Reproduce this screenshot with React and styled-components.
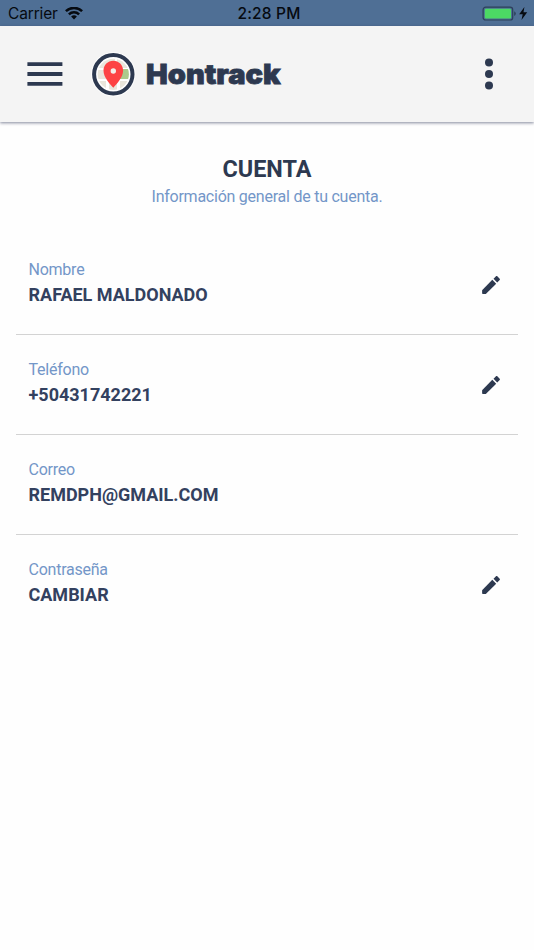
import React from "react";
import styled, { createGlobalStyle } from "styled-components";

const GlobalStyle = createGlobalStyle`
  body {
    margin: 0;
    background: #fefefe;
    font-family: Roboto, sans-serif;
  }
`;

const Screen = styled.div`
  display: flex;
  flex-direction: column;
  width: 534px;
  height: 950px;
  overflow: hidden;
`;

const StatusBar = styled.div`
  display: grid;
  grid-template-columns: 1fr auto 1fr;
  align-items: center;
  box-sizing: border-box;
  height: 26px;
  padding: 1px 6px 0 8px;
  background: #4f6f95;
  color: #060a10;
  font: 15.5px/26px Inter, sans-serif;
`;

const Carrier = styled.div`
  display: flex;
  align-items: center;
  gap: 7px;
  letter-spacing: -0.15px;

  svg {
    margin-bottom: 2px;
  }
`;

const Clock = styled.div`
  margin-left: 2px;
  font-weight: 500;
  font-size: 15.5px;
  letter-spacing: 0.2px;
`;

const Power = styled.div`
  display: flex;
  align-items: center;
  justify-content: flex-end;
`;

const Header = styled.header`
  display: flex;
  align-items: center;
  box-sizing: border-box;
  height: 96px;
  flex: none;
  padding: 0 40px 0 27px;
  background: #f4f4f4;
  box-shadow: 0 1px 3px rgba(50, 56, 90, 0.6);
`;

const IconButton = styled.button`
  display: flex;
  padding: 0;
  border: 0;
  background: none;
  color: #2d3950;
`;

const Brand = styled.div`
  display: flex;
  align-items: center;
  flex: 1;
  margin-left: 28px;
  gap: 9.5px;
`;

const BrandName = styled.span`
  color: #2d3950;
  font: 900 27.5px/40px Inter, sans-serif;
  letter-spacing: 0;
  -webkit-text-stroke: 0.8px #2d3950;
  transform: scaleX(1.055);
  transform-origin: left;
`;

const Heading = styled.div`
  box-sizing: border-box;
  height: 113px;
  padding-top: 32px;
  text-align: center;
`;

const Title = styled.h1`
  margin: 0;
  color: #2d3950;
  font-size: 23.4px;
  line-height: 30px;
  font-weight: 700;
`;

const Subtitle = styled.p`
  margin: 0;
  color: #7396c8;
  font-size: 16px;
  line-height: 26px;
  letter-spacing: -0.24px;
`;

const List = styled.div`
  padding: 0 16px;
`;

const Row = styled.div`
  display: flex;
  align-items: center;
  justify-content: space-between;
  box-sizing: border-box;
  height: 100px;
  padding: 1px 15px 0 12.5px;
  border-bottom: 1px solid #d3d3d3;

  &:last-child {
    border-bottom-color: transparent;
  }
`;

const Field = styled.div`
  padding-bottom: 5px;
`;

const Label = styled.div`
  color: #7396c8;
  font-size: 16px;
  line-height: 24px;
  letter-spacing: -0.24px;
`;

const Value = styled.div`
  color: #33415f;
  font-size: 18px;
  line-height: 25px;
  font-weight: 700;
`;

const fields = [
  { label: "Nombre", value: "RAFAEL MALDONADO", editable: true },
  { label: "Teléfono", value: "+50431742221", editable: true },
  { label: "Correo", value: "REMDPH@GMAIL.COM", editable: false },
  { label: "Contraseña", value: "CAMBIAR", editable: true },
];

const WifiIcon = () => (
  <svg width="18" height="13" viewBox="0 0 18 13" fill="none" stroke="#060a10" strokeWidth="2.5">
    <path d="M.9 4.2a11.6 11.6 0 0 1 16.2 0" />
    <path d="M3.9 7.4a7.3 7.3 0 0 1 10.2 0" />
    <path d="M9 12.5 6.1 9.6a4.1 4.1 0 0 1 5.8 0z" fill="#060a10" stroke="none" />
  </svg>
);

const BatteryIcon = () => (
  <svg width="46" height="16" viewBox="0 0 46 16">
    <rect x="1.1" y="1.2" width="29.6" height="12.8" rx="2.6" fill="none" stroke="#2c4059" strokeWidth="1.2" />
    <rect x="2.8" y="2.8" width="26.2" height="9.6" rx="1.2" fill="#4cd964" />
    <path d="M32.2 5.3q1.6.6 1.6 2.3t-1.6 2.3z" fill="#2c4059" />
    <path d="M42.4 1.1 37.2 8.3h3.5l-1.2 5.7 5.7-7.8h-3.7z" fill="#060a10" />
  </svg>
);

const MenuIcon = () => (
  <svg width="36" height="26" viewBox="0 0 36 26" fill="currentColor">
    <path d="M.4 1.3h35v3.8h-35zM.4 11.1h35v3.8h-35zM.4 20.9h35v3.8h-35z" />
  </svg>
);

const DotsIcon = () => (
  <svg width="10" height="34" viewBox="0 0 10 34" fill="currentColor">
    <circle cx="5" cy="5.5" r="4" />
    <circle cx="5" cy="17" r="4" />
    <circle cx="5" cy="28.5" r="4" />
  </svg>
);

const PencilIcon = () => (
  <svg width="24" height="24" viewBox="0 0 24 24" fill="currentColor">
    <path d="M3.1 17.3v3c0 .4.3.7.7.7h3L17.2 10.7l-3.9-3.9z" />
    <path d="M20.7 7c.4-.4.4-.9 0-1.3l-2.4-2.4c-.4-.4-.9-.4-1.3 0l-2.5 2.5 3.7 3.7z" />
  </svg>
);

// Map pin over a tiny street map, inside a ring
const Logo = () => (
  <svg width="45" height="46" viewBox="0 0 45 46">
    <circle cx="22.3" cy="23.3" r="22.3" fill="#fdfdfd" />
    <circle cx="22.3" cy="23.3" r="19.2" fill="#fff" stroke="#2d3950" strokeWidth="4" />
    <clipPath id="map">
      <circle cx="22.3" cy="23.3" r="15.6" />
    </clipPath>
    <g clipPath="url(#map)">
      <path d="M6 6h18v11H6zM6 19h9v9H6zM6 30h9v10H6zM18 29h8v10h-8zM29 30h10v9H29zM26 6h12v11H26z" fill="#e9e6dc" />
      <path d="M28 18h11v10H28z" fill="#acca8c" />
    </g>
    <path
      d="M22.3 9.7c5.5 0 9.8 4.3 9.8 9.7 0 6.7-6 13-9.8 17.3-3.8-4.3-9.8-10.6-9.8-17.3 0-5.4 4.3-9.7 9.8-9.7z"
      fill="#fd4344"
    />
    <circle cx="22.3" cy="20" r="2.7" fill="#f3eee9" />
  </svg>
);

export default function App() {
  return (
    <>
      <GlobalStyle />
      <Screen>
        <StatusBar>
          <Carrier>
            Carrier
            <WifiIcon />
          </Carrier>
          <Clock>2:28 PM</Clock>
          <Power>
            <BatteryIcon />
          </Power>
        </StatusBar>
        <Header>
          <IconButton aria-label="Menú">
            <MenuIcon />
          </IconButton>
          <Brand>
            <Logo />
            <BrandName>Hontrack</BrandName>
          </Brand>
          <IconButton aria-label="Opciones">
            <DotsIcon />
          </IconButton>
        </Header>
        <Heading>
          <Title>CUENTA</Title>
          <Subtitle>Información general de tu cuenta.</Subtitle>
        </Heading>
        <List>
          {fields.map(({ label, value, editable }) => (
            <Row key={label}>
              <Field>
                <Label>{label}</Label>
                <Value>{value}</Value>
              </Field>
              {editable && (
                <IconButton aria-label={`Editar ${label}`}>
                  <PencilIcon />
                </IconButton>
              )}
            </Row>
          ))}
        </List>
      </Screen>
    </>
  );
}
